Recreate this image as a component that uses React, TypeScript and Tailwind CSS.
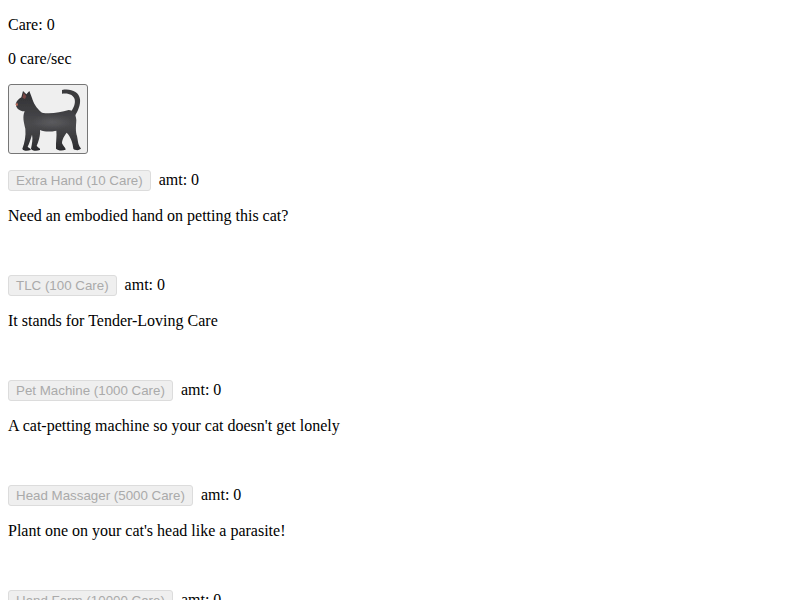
const items = [
  ["Extra Hand (10 Care)", "Need an embodied hand on petting this cat?"],
  ["TLC (100 Care)", "It stands for Tender-Loving Care"],
  ["Pet Machine (1000 Care)", "A cat-petting machine so your cat doesn't get lonely"],
  ["Head Massager (5000 Care)", "Plant one on your cat's head like a parasite!"],
  ["Hand Farm (10000 Care)", "A farm of hands"],
];

function Cat() {
  return (
    <svg width="72" height="66" viewBox="0 0 216 198" aria-hidden="true" className="shrink-0">
      <defs>
        <linearGradient id="fur" x1="0" y1="0" x2="0" y2="1">
          <stop offset="0" stopColor="#2f2f32" />
          <stop offset="0.55" stopColor="#4a4a4d" />
          <stop offset="0.75" stopColor="#3e3e41" />
          <stop offset="1" stopColor="#2a2a2d" />
        </linearGradient>
        <radialGradient id="sheen" cx="0.5" cy="0.5" r="0.5">
          <stop offset="0" stopColor="#636366" stopOpacity="0.7" />
          <stop offset="1" stopColor="#636366" stopOpacity="0" />
        </radialGradient>
        <filter id="soft" x="-5%" y="-5%" width="110%" height="110%">
          <feGaussianBlur stdDeviation="1.4" />
        </filter>
      </defs>
      <g filter="url(#soft)">
        <path d="M150 12C176 7 201 17 204 40C206 58 197 76 189 90L175 80C184 68 191 54 188 40C185 27 170 20 150 23Z" fill="#3b3b3e" />
        <path
          d="M11 54C14 45 20 39 28 34L33 15L43 25L52 15L60 36C64 50 72 66 90 80C115 85 145 79 170 72C183 72 192 84 193 102C192 122 190 135 195 150C198 165 198 178 207 187C205 194 188 194 184 188C182 170 176 152 164 140C158 148 150 160 150 172C153 180 161 185 161 191C150 195 138 194 132 188C131 170 135 150 133 134C115 138 98 138 84 132C86 150 78 170 74 180C79 185 86 188 84 192C74 196 60 195 57 188C60 172 63 158 60 146C56 160 51 174 47 182C51 186 58 188 56 192C46 196 33 195 31 188C38 170 42 150 40 128C35 108 31 92 38 76C28 76 18 72 13 62Z"
          fill="url(#fur)"
        />
        <ellipse cx="120" cy="108" rx="62" ry="24" fill="url(#sheen)" />
        <path d="M35 20L43 31L39 39L31 35Z" fill="#7a4644" />
        <path d="M11 54L16 50L18 58L13 60Z" fill="#c5705f" />
      </g>
    </svg>
  );
}

export default function App() {
  return (
    <div className="h-screen overflow-hidden px-2 font-['Liberation_Serif',serif] text-base leading-[18px] text-black">
      <p className="mb-4 pt-4">Care: 0</p>
      <p className="my-4">0 care/sec</p>
      <button className="flex h-[70px] w-20 items-center justify-center overflow-hidden rounded-[3px] border border-[#767676] bg-[#efefef]">
        <Cat />
      </button>
      <div className="mt-4 flex flex-col">
        {items.map(([label, text]) => (
          <div key={label} className="h-[105px] shrink-0">
            <div className="flex h-[21px] items-center gap-2">
              <button disabled className="h-[21px] rounded-[3px] border border-[#dcdcdc] bg-[#efefef] px-[7px] font-['Liberation_Sans',sans-serif] text-[13.33px] leading-[15px] text-[#aaaaaa]">
                {label}
              </button>
              <span className="mb-0.5">amt: 0</span>
            </div>
            <p className="my-4">{text}</p>
          </div>
        ))}
      </div>
    </div>
  );
}
